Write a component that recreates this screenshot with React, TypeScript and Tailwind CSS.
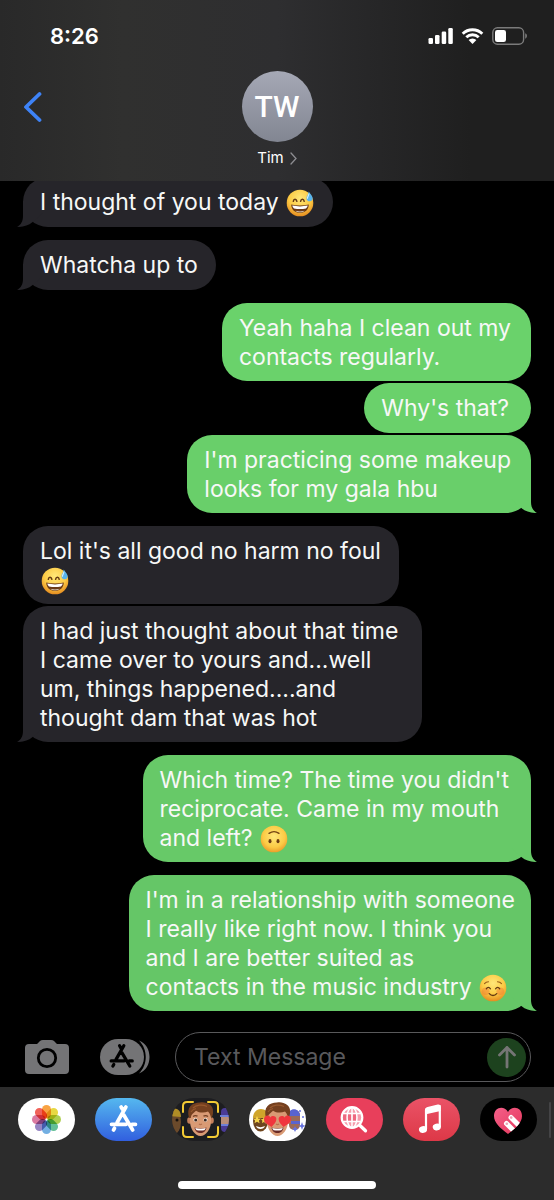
import type { ReactNode } from "react";

type EmojiName = "sweat" | "upsideDown" | "smiling";

type Message = {
  from: "me" | "them";
  lines: string[];
  emoji?: EmojiName;
  last?: boolean;
  tone?: string;
  pad?: string;
};

const MESSAGES: Message[] = [
  { from: "them", lines: ["I thought of you today "], emoji: "sweat", last: true, pad: "pr-[18px]" },
  { from: "them", lines: ["Whatcha up to"], last: true, pad: "pr-[18px]" },
  { from: "me", lines: ["Yeah haha I clean out my", "contacts regularly."], tone: "bg-[#6ad26b] text-[#6ad26b]", pad: "pr-5" },
  { from: "me", lines: ["Why's that?"], tone: "bg-[#6ad16b] text-[#6ad16b]" },
  {
    from: "me",
    lines: ["I'm practicing some makeup", "looks for my gala hbu"],
    last: true,
    tone: "bg-[#69cf6a] text-[#69cf6a]",
    pad: "pr-5",
  },
  { from: "them", lines: ["Lol it's all good no harm no foul", ""], emoji: "sweat", pad: "pr-[18px]" },
  {
    from: "them",
    lines: ["I had just thought about that time", "I came over to yours and...well", "um, things happened....and", "thought dam that was hot"],
    last: true,
    pad: "pr-6",
  },
  {
    from: "me",
    lines: ["Which time? The time you didn't", "reciprocate. Came in my mouth", "and left? "],
    emoji: "upsideDown",
    last: true,
    tone: "bg-[#67c968] text-[#67c968]",
  },
  {
    from: "me",
    lines: ["I'm in a relationship with someone", "I really like right now. I think you", "and I are better suited as", "contacts in the music industry "],
    emoji: "smiling",
    last: true,
    tone: "bg-[#65c667] text-[#65c667]",
    pad: "pr-4",
  },
];

function Emoji({ name }: { name: EmojiName }) {
  const labels = { sweat: "grinning face with sweat", upsideDown: "upside-down face", smiling: "smiling face" };
  return (
    <svg role="img" aria-label={labels[name]} viewBox="0 0 28 28" className="mx-px inline-block size-7 align-bottom">
      <defs>
        <radialGradient id={`face-${name}`} cx="50%" cy={name === "upsideDown" ? "40%" : "32%"} r="68%">
          <stop offset="0" stopColor="#ffe779" />
          <stop offset="0.6" stopColor="#fccb45" />
          <stop offset="1" stopColor="#e58c20" />
        </radialGradient>
      </defs>
      <circle cx="14" cy="14" r="13.3" fill={`url(#face-${name})`} />
      {name === "sweat" && (
        <>
          <path d="M7.3 12.3c.4-2.8 3-2.8 3.6 0M14.6 12.3c.5-2.8 3.1-2.8 3.6 0" fill="none" stroke="#653a12" strokeWidth="1.5" strokeLinecap="round" />
          <path d="M5.2 15.5c5.4 1.3 12.2 1.3 17.6 0-.2 5.3-3.7 8.3-8.8 8.3s-8.6-3-8.8-8.3Z" fill="#6b3a17" />
          <path d="M6.3 16.6c5 1.1 10.4 1.1 15.4 0-.3 1.5-.8 2.2-1.7 2.900-4 .8-8 .8-12 0-.9-.7-1.4-1.4-1.7-2.900Z" fill="#fff" />
          <path d="M9.5 21.7c3 .9 6 .9 9 0-1 1-2.7 1.5-4.500 1.500s-3.500-.5-4.500-1.500Z" fill="#e8ddd0" />
          <path d="M22.8 2.500c-.2 3-2.600 4.500-2.300 7 .2 2 1.700 3 3.400 2.800 1.800-.2 3-1.700 2.700-3.600-.4-2.300-2.400-3.600-3.800-6.200Z" fill="#58b4ec" />
          <path d="M22.9 5c-.4 2-1.5 2.900-1.400 4.300" fill="none" stroke="#d9f2ff" strokeWidth="1.1" strokeLinecap="round" />
        </>
      )}
      {name === "upsideDown" && (
        <>
          <path d="M9 8.400c3-2.100 7-2.100 10 0" fill="none" stroke="#744414" strokeWidth="1.3" strokeLinecap="round" />
          <ellipse cx="10" cy="16.2" rx="1.5" ry="2.1" fill="#6b3b13" />
          <ellipse cx="18" cy="16.2" rx="1.5" ry="2.1" fill="#6b3b13" />
        </>
      )}
      {name === "smiling" && (
        <>
          <circle cx="6.7" cy="17.3" r="3.8" fill="#f27f35" opacity="0.5" />
          <circle cx="21.3" cy="17.3" r="3.8" fill="#f27f35" opacity="0.5" />
          <path d="M5.5 9.600c1-1.300 2.300-1.900 4-1.900M22.500 9.600c-1-1.300-2.300-1.900-4-1.900" fill="none" stroke="#9a5e17" strokeWidth="1.1" strokeLinecap="round" />
          <path d="M7.3 14.800c1.100-1.800 3-1.800 4.100 0M16.600 14.800c1.100-1.800 3-1.800 4.100 0" fill="none" stroke="#653a12" strokeWidth="1.3" strokeLinecap="round" />
          <path d="M10.3 19.600c2 2.500 5.400 2.500 7.400 0" fill="none" stroke="#653a12" strokeWidth="1.3" strokeLinecap="round" />
        </>
      )}
    </svg>
  );
}

function Tail({ side }: { side: "left" | "right" }) {
  return (
    <svg
      viewBox="0 0 26 26"
      aria-hidden="true"
      className={side === "left" ? "absolute bottom-0 -left-1.5 size-[26px]" : "absolute -right-1.5 bottom-0 size-[26px] -scale-x-100"}
    >
      <path d="M6 0V15C6 20 4 24 0 25.800 6 26.300 11.500 24.500 15.300 21.300L26 12V0Z" fill="currentColor" />
    </svg>
  );
}

function Bubble({ message, grouped }: { message: Message; grouped: boolean }) {
  const mine = message.from === "me";
  const tone = message.tone ?? "bg-[#26252a] text-[#26252a]";
  return (
    <li className={`flex ${mine ? "justify-end" : "justify-start"} ${grouped ? "mt-0.5" : "mt-[13px]"}`}>
      <div className={`relative min-h-[50px] rounded-[25px] pt-[11px] pb-[9px] pl-[17px] ${message.pad ?? "pr-[22px]"} ${tone}`}>
        {message.last && <Tail side={mine ? "right" : "left"} />}
        <p className="relative text-[23px] leading-[29px] whitespace-nowrap text-[#f7f8f7]">
          {message.lines.map((line, i) => (
            <span key={i} className="block whitespace-pre">
              {line}
              {message.emoji && i === message.lines.length - 1 && <Emoji name={message.emoji} />}
            </span>
          ))}
        </p>
      </div>
    </li>
  );
}

function StatusIcons() {
  return (
    <div className="flex items-center gap-2">
      <svg viewBox="0 0 25 18" className="h-[18px] w-[25px]" fill="#fff" aria-label="Signal">
        <rect x="0.5" y="11" width="4.5" height="6" rx="1.3" />
        <rect x="7" y="8" width="4.5" height="9" rx="1.3" />
        <rect x="13.7" y="4.5" width="4.5" height="12.5" rx="1.3" />
        <rect x="20.3" y="1" width="4.5" height="16" rx="1.3" />
      </svg>
      <svg viewBox="0 0 23 18" className="h-[18px] w-[23px]" aria-label="Wi-Fi">
        <path d="M1.700 6.700a14 14 0 0 1 19.600 0M5.300 10.300a9 9 0 0 1 12.400 0" fill="none" stroke="#fff" strokeWidth="2.9" />
        <path d="M7.600 13a5.700 5.700 0 0 1 7.800 0l-3.900 4Z" fill="#fff" />
      </svg>
      <svg viewBox="0 0 36 18" className="h-[18px] w-9" aria-label="Battery">
        <rect x="0.8" y="0.8" width="30.8" height="16.4" rx="4.7" fill="none" stroke="#7b7b7b" strokeWidth="1.4" />
        <rect x="3" y="3" width="11" height="12" rx="2.3" fill="#fff" />
        <path d="M33.200 6.300c2.300.8 2.300 4.600 0 5.400Z" fill="#7b7b7b" />
      </svg>
    </div>
  );
}

function StoreGlyph() {
  return (
    <g fill="none" stroke="currentColor" strokeWidth="3.7" strokeLinecap="round">
      <path d="M12.600 2 14 4.400M17.400 2 8.600 17.500M3 19.300H17.500M23.500 19.300H27M15 9.500 24.200 25M6 23.300 5 25" />
    </g>
  );
}

function PhotosArt() {
  const petals = ["#f8992e", "#e5d42e", "#a5ca3d", "#52b98b", "#64a6df", "#8b78bd", "#d66b97", "#ef5147"];
  return (
    <svg viewBox="0 0 57 43" className="size-full">
      <rect width="57" height="43" fill="#fff" />
      {petals.map((color, i) => (
        <rect
          key={color}
          x="24"
          y="7"
          width="9"
          height="13.5"
          rx="4.5"
          fill={color}
          opacity="0.9"
          transform={`rotate(${i * 45} 28.5 21.5)`}
          className="mix-blend-multiply"
        />
      ))}
    </svg>
  );
}

function StoreArt() {
  return (
    <svg viewBox="0 0 57 43" className="size-full text-white">
      <defs>
        <linearGradient id="store" x1="0" y1="0" x2="0" y2="1">
          <stop offset="0" stopColor="#55b8ef" />
          <stop offset="1" stopColor="#315fdf" />
        </linearGradient>
      </defs>
      <rect width="57" height="43" fill="url(#store)" />
      <g transform="translate(13.500 7)">
        <StoreGlyph />
      </g>
    </svg>
  );
}

function MemojiHead({ hearts }: { hearts?: boolean }) {
  return (
    <g>
      <ellipse cx="17.5" cy="22.5" rx="2.3" ry="3.3" fill="#c57f5b" />
      <ellipse cx="39.5" cy="22.5" rx="2.3" ry="3.3" fill="#c57f5b" />
      <path d="M18 14c0-6 21-6 21 0v9c0 8-5 15-10.500 15S18 31 18 23Z" fill="#d99a74" />
      <path d="M17 20C14 9 20 4.500 28 4.500c5-1.500 14 2 13 9 .3 3-.8 5-1.800 7-.6-3-1.200-5-3.200-7-4 1.800-9 1.200-12-.8-2 2-5 3.300-5.200 7.300Z" fill="#75401f" />
      <path d="M21 10c3-3 9-4 14-1.500M19 14c1-2 3-3 5-3.500" fill="none" stroke="#98592f" strokeWidth="1.2" />
      {hearts ? (
        <g fill="#f0363d">
          <path d="M22.500 29c-5-2.800-8.200-5.200-7.300-8.900.9-3.100 4.900-3.400 6.100-.7 1.900-2.700 6.100-1.600 6.100 1.700 0 3.200-2.500 5.500-4.900 7.900Z" />
          <path d="M34.500 29c-2.400-2.400-4.900-4.700-4.900-7.900 0-3.300 4.200-4.400 6.100-1.700 1.200-2.700 5.200-2.400 6.100.7.900 3.700-2.300 6.100-7.300 8.900Z" />
        </g>
      ) : (
        <>
          <path d="M21 18.500c1.500-1.200 3-1.200 4.500-.4M31.500 18.100c1.500-.8 3-.8 4.500.4" fill="none" stroke="#6f3c20" strokeWidth="1.3" />
          <ellipse cx="23.5" cy="21.8" rx="2" ry="1.9" fill="#fff" />
          <ellipse cx="33.5" cy="21.8" rx="2" ry="1.9" fill="#fff" />
          <circle cx="23.7" cy="21.9" r="1.5" fill="#39251c" />
          <circle cx="33.3" cy="21.9" r="1.5" fill="#39251c" />
        </>
      )}
      <path d="M27 26c1 .7 2 .7 3 0" fill="none" stroke="#b87350" strokeWidth="1.2" />
      <path d="M22.500 29.500c4 1.200 8 1.200 12 0-.5 3.700-3 5.500-6 5.500s-5.500-1.800-6-5.500Z" fill="#682a26" />
      <path d="M23.300 30.100c3.500.9 6.900.9 10.400 0-.4 1.500-1 1.900-1.500 2.100-2.500.4-4.900.4-7.400 0-.5-.2-1.100-.6-1.500-2.100Z" fill="#fff" />
    </g>
  );
}

function MemojiArt() {
  return (
    <svg viewBox="0 0 57 43" className="size-full">
      <rect width="57" height="43" fill="#1d1d20" />
      <ellipse cx="2" cy="24" rx="7" ry="12" fill="#6b4a2b" />
      <path d="M-4 18C-3 8 9 8 9 19Z" fill="#b08d26" />
      <circle cx="5" cy="22" r="1.5" fill="#17110d" />
      <rect x="49" y="10" width="10" height="24" rx="4" fill="#4a3b96" />
      <path d="M49 19h9v7h-9Z" fill="#b98d78" />
      <path d="M48 18h10M49 27h9" stroke="#6d7ed6" strokeWidth="2" />
      <MemojiHead />
      <path d="M11 14V8q0-4 4-4h6M36 4h6q4 0 4 4v6M46 29v6q0 4-4 4h-6M21 39h-6q-4 0-4-4v-6" fill="none" stroke="#f4cb35" strokeWidth="2" strokeLinecap="round" />
    </svg>
  );
}

function StickersArt() {
  return (
    <svg viewBox="0 0 57 43" className="size-full">
      <rect width="57" height="43" fill="#fff" />
      <ellipse cx="11.5" cy="23" rx="7.5" ry="10.5" fill="#6f451e" />
      <path d="M4 20c0-12 16-12 16 0Z" fill="#d0a52b" />
      <path d="m8 18 1.200 2.500 2.700.2-2 1.800.7 2.700L8 23.800l-2.500 1.400.6-2.700-2-1.800 2.700-.2ZM15 19l1 2 2 .3-1.500 1.500.4 2.200-1.900-1-2 1 .4-2.200-1.500-1.500 2.100-.3Z" fill="#f7d54b" />
      <path d="M7 28c3 1.500 6 1.500 9 0-1 4-8 4-9 0Z" fill="#fff" />
      <rect x="40" y="12" width="11" height="20" rx="5" fill="#9b6a58" />
      <path d="M39 18c0-9 12-9 12 0ZM42 23h9v3h-9Z" fill="#5963cf" />
      <path d="m53 24 1 3 3 1-3 1-1 3-1-3-3-1 3-1ZM46 28l1 2 2 1-2 1-1 2-1-2-2-1 2-1Z" fill="#6572df" />
      <circle cx="51" cy="13" r="1" fill="#6572df" />
      <circle cx="54" cy="19" r="1" fill="#6572df" />
      <MemojiHead hearts />
    </svg>
  );
}

function ImagesArt() {
  return (
    <svg viewBox="0 0 57 43" className="size-full">
      <rect width="57" height="43" fill="#e83f5b" />
      <circle cx="26" cy="19.5" r="10.3" fill="#f59cac" stroke="#fff" strokeWidth="2.2" />
      <path d="M16 15.500h20M16 23.500h20M26 9v21" stroke="#fff" strokeWidth="1.5" />
      <ellipse cx="26" cy="19.5" rx="5" ry="10" fill="none" stroke="#fff" strokeWidth="1.5" />
      <path d="M22 16.500h3v6h-3ZM27 16.500h3v6h-3ZM17 16.500h3.300v6H17Z" fill="#e83f5b" opacity="0.55" />
      <path d="m34 27.500 5.500 5.300" stroke="#fff" strokeWidth="3.3" strokeLinecap="round" />
    </svg>
  );
}

function MusicArt() {
  return (
    <svg viewBox="0 0 57 43" className="size-full">
      <defs>
        <linearGradient id="music" x1="0" y1="0" x2="0" y2="1">
          <stop offset="0" stopColor="#ea5367" />
          <stop offset="1" stopColor="#dd3847" />
        </linearGradient>
      </defs>
      <rect width="57" height="43" fill="url(#music)" />
      <path d="M23 31V12.300q0-1.900 1.800-2.300L35 7.700q1.800-.3 1.800 1.400V29" fill="none" stroke="#fff" strokeWidth="2.2" />
      <path d="M22.500 10.500 37.500 7v6L23 16.300Z" fill="#fff" />
      <ellipse cx="20" cy="31.5" rx="4.1" ry="3.4" fill="#fff" transform="rotate(-15 20 31.5)" />
      <ellipse cx="33.8" cy="29" rx="4.1" ry="3.4" fill="#fff" transform="rotate(-15 33.8 29)" />
    </svg>
  );
}

function TouchArt() {
  return (
    <svg viewBox="0 0 57 43" className="size-full">
      <defs>
        <linearGradient id="touch" x1="0" y1="0" x2="1" y2="1">
          <stop offset="0" stopColor="#f5628c" />
          <stop offset="1" stopColor="#e43559" />
        </linearGradient>
        <clipPath id="heart">
          <path d="M28 36C20 30 14 24.500 14 18c0-9 10-11 14-4 4-7 14-5 14 4 0 6.500-6 12-14 18Z" />
        </clipPath>
      </defs>
      <rect width="57" height="43" fill="#000" />
      <g clipPath="url(#heart)">
        <rect x="13" y="8" width="30" height="29" fill="url(#touch)" />
        <path d="m26.500 25.500 9 9M31 19.500l11 11" stroke="#fff" strokeWidth="5" strokeLinecap="round" />
        <circle cx="26.8" cy="25.7" r="1.3" fill="#e8a5b4" />
        <circle cx="31.2" cy="19.6" r="1.3" fill="#e8a5b4" />
      </g>
    </svg>
  );
}

const APPS: { name: string; art: ReactNode }[] = [
  { name: "Photos", art: <PhotosArt /> },
  { name: "App Store", art: <StoreArt /> },
  { name: "Memoji", art: <MemojiArt /> },
  { name: "Stickers", art: <StickersArt /> },
  { name: "Images", art: <ImagesArt /> },
  { name: "Music", art: <MusicArt /> },
  { name: "Digital Touch", art: <TouchArt /> },
];

export default function App() {
  return (
    <div className="flex min-h-screen flex-col overflow-hidden bg-black font-['Inter',sans-serif] text-white">
      <header className="relative z-10 bg-[linear-gradient(to_right,#292929,#30302f_22%,#2e2e30_50%,#1f1f1f_85%)] pb-[7px]">
        <div className="flex h-[71px] items-center justify-between pr-[26px] pl-[50px]">
          <time className="text-[22px] leading-7 font-semibold">8:26</time>
          <StatusIcons />
        </div>
        <div className="grid grid-cols-[1fr_auto_1fr] items-center">
          <button type="button" aria-label="Back" className="flex h-11 w-16 items-center pl-[23px]">
            <svg viewBox="0 0 19 32" className="h-8 w-[19px]">
              <path d="M16.500 3 3 16l13.500 13" fill="none" stroke="#3e83f7" strokeWidth="3.8" strokeLinecap="round" strokeLinejoin="round" />
            </svg>
          </button>
          <div className="flex size-[71px] items-center justify-center rounded-full bg-linear-to-b from-[#a5a8b5] to-[#828692] font-['Roboto',sans-serif] text-[30px] font-medium">
            TW
          </div>
        </div>
        <button type="button" className="mx-auto flex h-8 items-center gap-1.5 text-[15px]">
          Tim
          <svg viewBox="0 0 7 13" className="h-[13px] w-[7px]">
            <path d="m1 1 5 5.500L1 12" fill="none" stroke="#8d8d91" strokeWidth="1.3" strokeLinecap="round" />
          </svg>
        </button>
      </header>

      <main className="-mt-[17px] flex-1 px-[23px] pb-[21px]">
        <ul>
          {MESSAGES.map((message, i) => (
            <Bubble key={i} message={message} grouped={i > 0 && MESSAGES[i - 1].from === message.from && !MESSAGES[i - 1].last} />
          ))}
        </ul>
      </main>

      <form className="flex items-center pr-[23px] pb-[5px] pl-6" onSubmit={(e) => e.preventDefault()}>
        <button type="button" aria-label="Camera" className="shrink-0">
          <svg viewBox="0 0 46 36" className="h-9 w-[46px]">
            <path d="M5 5h8l3-3q1-1 3-1h8q2 0 3 1l3 3h8q4 0 4 4v22q0 4-4 4H5q-4 0-4-4V9q0-4 4-4Z" fill="#747476" />
            <circle cx="23" cy="19" r="8.7" fill="none" stroke="#000" strokeWidth="2.8" />
          </svg>
        </button>
        <button type="button" aria-label="Apps" className="ml-[30px] shrink-0">
          <svg viewBox="0 0 50 36" className="h-9 w-[50px]">
            <path d="M39 1.500c14 5 14 28 0 33 9-9 9-24 0-33Z" fill="#747476" />
            <rect width="44" height="36" rx="18" fill="#747476" />
            <g transform="translate(8.500 5) scale(0.88)" className="text-black">
              <StoreGlyph />
            </g>
          </svg>
        </button>
        <div className="ml-[25px] flex h-[50px] min-w-0 flex-1 items-center rounded-full border border-[#59595b] pr-1 pl-[18px]">
          <input
            type="text"
            aria-label="Text Message"
            placeholder="Text Message"
            className="min-w-0 flex-1 bg-transparent text-[23px] outline-none placeholder:text-[#59595c]"
          />
          <button type="submit" aria-label="Send" className="flex size-[39px] shrink-0 items-center justify-center rounded-full bg-[#1d421e]">
            <svg viewBox="0 0 20 24" className="h-6 w-5">
              <path d="M10 22V2.500M2.500 10 10 2.500l7.500 7.500" fill="none" stroke="#757575" strokeWidth="2.8" strokeLinecap="round" strokeLinejoin="round" />
            </svg>
          </button>
        </div>
      </form>

      <footer className="bg-[#2c2c2c] py-[11px]">
        <nav aria-label="Message apps" className="flex items-center gap-5 overflow-hidden pl-[18px]">
          {APPS.map((app) => (
            <button
              key={app.name}
              type="button"
              aria-label={app.name}
              className="isolate h-[43px] w-[57px] shrink-0 overflow-hidden rounded-full"
            >
              {app.art}
            </button>
          ))}
          <span className="-ml-2 h-9 w-0.5 shrink-0 rounded-full bg-[#444446]" />
        </nav>
        <div className="mx-auto mt-10 h-2 w-[198px] rounded-full bg-white" />
      </footer>
    </div>
  );
}
